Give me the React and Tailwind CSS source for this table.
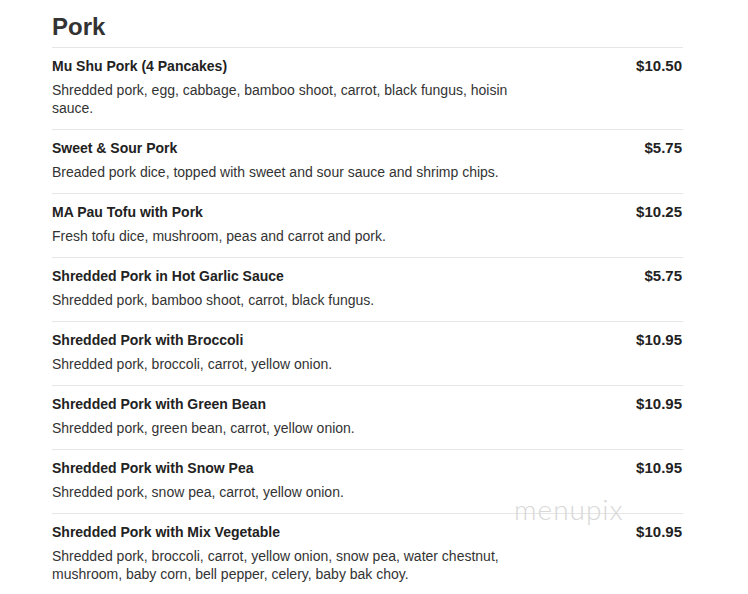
const items = [
  {
    name: "Mu Shu Pork (4 Pancakes)",
    price: "$10.50",
    desc: "Shredded pork, egg, cabbage, bamboo shoot, carrot, black fungus, hoisin sauce.",
  },
  {
    name: "Sweet & Sour Pork",
    price: "$5.75",
    desc: "Breaded pork dice, topped with sweet and sour sauce and shrimp chips.",
  },
  {
    name: "MA Pau Tofu with Pork",
    price: "$10.25",
    desc: "Fresh tofu dice, mushroom, peas and carrot and pork.",
  },
  {
    name: "Shredded Pork in Hot Garlic Sauce",
    price: "$5.75",
    desc: "Shredded pork, bamboo shoot, carrot, black fungus.",
  },
  {
    name: "Shredded Pork with Broccoli",
    price: "$10.95",
    desc: "Shredded pork, broccoli, carrot, yellow onion.",
  },
  {
    name: "Shredded Pork with Green Bean",
    price: "$10.95",
    desc: "Shredded pork, green bean, carrot, yellow onion.",
  },
  {
    name: "Shredded Pork with Snow Pea",
    price: "$10.95",
    desc: "Shredded pork, snow pea, carrot, yellow onion.",
  },
  {
    name: "Shredded Pork with Mix Vegetable",
    price: "$10.95",
    desc: "Shredded pork, broccoli, carrot, yellow onion, snow pea, water chestnut, mushroom, baby corn, bell pepper, celery, baby bak choy.",
  },
];

function App() {
  return (
    <div className="relative w-[748px] h-[594px] bg-white overflow-hidden font-['Liberation_Sans',Arial,sans-serif] text-[#333]">
      <div className="ml-[52px] w-[631px]">
        {/* Section heading */}
        <h1 className="pt-[13px] pb-[6px] text-[24px] leading-[28px] font-bold text-[#333]">
          Pork
        </h1>

        {/* Menu items */}
        {items.map((item, i) => (
          <div key={i} className="border-t border-[#e6e6e6] pt-[9px] pb-[12px] flex justify-between">
            <div>
              <div className="text-[14px] leading-[18px] font-bold text-[#222]">{item.name}</div>
              <p className="mt-[6px] max-w-[480px] text-[14px] leading-[18px] text-[#333]">
                {item.desc}
              </p>
            </div>
            <div className="pr-px text-[15px] leading-[18px] font-bold text-[#222]">{item.price}</div>
          </div>
        ))}
      </div>

      {/* watermark */}
      <div className="absolute left-[514px] top-[494px] text-[28px] leading-[30px] font-light tracking-[1px] text-[#d8d8d8] font-['Lato',sans-serif]">
        menupix
      </div>
    </div>
  );
}

export default App;
